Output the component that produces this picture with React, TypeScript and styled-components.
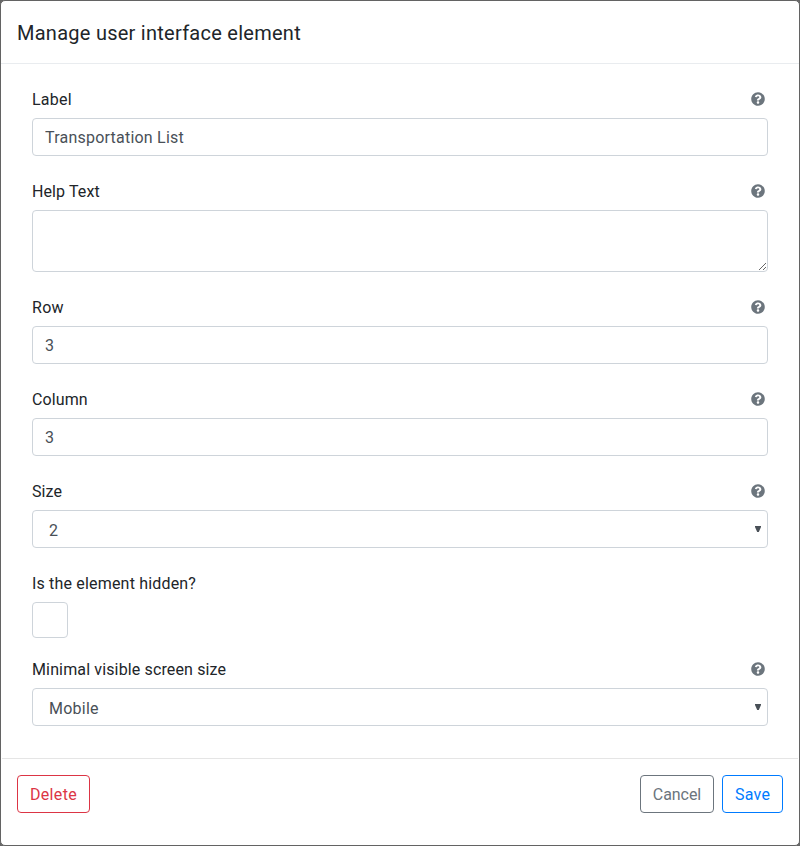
import React from "react";
import styled, { createGlobalStyle } from "styled-components";
import { FaQuestionCircle } from "react-icons/fa";

const GlobalStyle = createGlobalStyle`
  *, *::before, *::after { box-sizing: border-box; }
  body {
    margin: 0;
    background: #666;
    color: #212529;
    font: 400 16px/24px Roboto, "Liberation Sans", sans-serif;
  }
`;

const Dialog = styled.section`
  display: flex;
  flex-direction: column;
  height: 846px;
  border: 1px solid #636363;
  border-radius: 5px;
  background: #fff;
`;

const Header = styled.header`
  height: 63px;
  padding: 17px 16px 15px;
  border-bottom: 1px solid #e9ecef;
`;

const Title = styled.h5`
  margin: 0;
  font-size: 20px;
  font-weight: 400;
  line-height: 30px;
  letter-spacing: 0.26px;
`;

const Body = styled.form`
  display: flex;
  flex-direction: column;
  flex: 1;
  gap: 22px;
  padding: 22px 31px 0;
`;

const Group = styled.div<{ $tight?: boolean }>`
  display: flex;
  flex-direction: column;
  gap: 8px;
  margin-bottom: ${(p) => (p.$tight ? "-4px" : "0")};
`;

const LabelRow = styled.div`
  display: flex;
  align-items: center;
  justify-content: space-between;
  height: 24px;
  padding-right: 3px;
`;

const Label = styled.label<{ $tracking: number }>`
  padding-top: 4px;
  letter-spacing: ${(p) => p.$tracking}px;
`;

const HelpIcon = styled(FaQuestionCircle)`
  width: 14px;
  height: 14px;
  margin-top: 2px;
  color: #6c757d;
`;

const Input = styled.input`
  display: block;
  width: 100%;
  height: 38px;
  padding: 6px 12px;
  border: 1px solid #ced4da;
  border-radius: 4px;
  outline: 0;
  background: #fff;
  color: #495057;
  font: inherit;
  letter-spacing: 0.22px;
`;

const TextArea = styled(Input).attrs({ as: "textarea" })`
  height: 62px;
  resize: vertical;
`;

const SelectFrame = styled.div`
  display: flex;
  align-items: center;
  height: 38px;
  padding-right: 6px;
  border: 1px solid #ced4da;
  border-radius: 4px;
  color: #495057;
`;

const Select = styled.select`
  flex: 1;
  height: 36px;
  padding: 3px 16px 0;
  border: 0;
  outline: 0;
  appearance: none;
  background: transparent;
  color: inherit;
  font: inherit;
  letter-spacing: 0.25px;
`;

const Arrow = styled.svg`
  width: 6px;
  height: 6px;
  margin-bottom: 1px;
  fill: #495057;
`;

const Checkbox = styled.input.attrs({ type: "checkbox" })`
  width: 36px;
  height: 36px;
  margin: 0;
  border: 1px solid #ced4da;
  border-radius: 4px;
  appearance: none;
  background: #fff;
`;

const Footer = styled.footer`
  display: flex;
  gap: 8px;
  height: 87px;
  margin: 0 1px;
  padding: 16px 15px;
  border-top: 1px solid #e5e5e5;
`;

const Button = styled.button<{ $color: string; $width: number; $tracking: number }>`
  width: ${(p) => p.$width}px;
  height: 38px;
  padding: 2px 0 0;
  border: 1px solid ${(p) => p.$color};
  border-radius: 4px;
  background: transparent;
  color: ${(p) => p.$color};
  font: inherit;
  letter-spacing: ${(p) => p.$tracking}px;
`;

const Spacer = styled.div`
  flex: 1;
`;

type FieldProps = {
  id: string;
  label: string;
  tracking: number;
  help?: boolean;
  tight?: boolean;
  children: React.ReactNode;
};

function Field({ id, label, tracking, help = true, tight, children }: FieldProps) {
  return (
    <Group $tight={tight}>
      <LabelRow>
        <Label htmlFor={id} $tracking={tracking}>{label}</Label>
        {help && <HelpIcon />}
      </LabelRow>
      {children}
    </Group>
  );
}

function Dropdown({ id, options }: { id: string; options: string[] }) {
  return (
    <SelectFrame>
      <Select id={id} defaultValue={options[0]}>
        {options.map((option) => <option key={option}>{option}</option>)}
      </Select>
      <Arrow viewBox="0 0 6 6"><path d="M0 0h6v1L3.8 6H2.2L0 1z" /></Arrow>
    </SelectFrame>
  );
}

export default function App() {
  return (
    <>
      <GlobalStyle />
      <Dialog>
        <Header><Title>Manage user interface element</Title></Header>
        <Body>
          <Field id="label" label="Label" tracking={0.25}>
            <Input id="label" defaultValue="Transportation List" />
          </Field>
          <Field id="help" label="Help Text" tracking={0.1}>
            <TextArea id="help" />
          </Field>
          <Field id="row" label="Row" tracking={0.3}>
            <Input id="row" defaultValue="3" />
          </Field>
          <Field id="column" label="Column" tracking={0.1}>
            <Input id="column" defaultValue="3" />
          </Field>
          <Field id="size" label="Size" tracking={0.1}>
            <Dropdown id="size" options={["2"]} />
          </Field>
          <Field id="hidden" label="Is the element hidden?" tracking={0.18} help={false} tight>
            <Checkbox id="hidden" />
          </Field>
          <Field id="screen" label="Minimal visible screen size" tracking={0.14}>
            <Dropdown id="screen" options={["Mobile"]} />
          </Field>
        </Body>
        <Footer>
          <Button $color="#dc3545" $width={73} $tracking={0.35}>Delete</Button>
          <Spacer />
          <Button $color="#6c757d" $width={74} $tracking={-0.05}>Cancel</Button>
          <Button $color="#007bff" $width={61} $tracking={0.25}>Save</Button>
        </Footer>
      </Dialog>
    </>
  );
}
